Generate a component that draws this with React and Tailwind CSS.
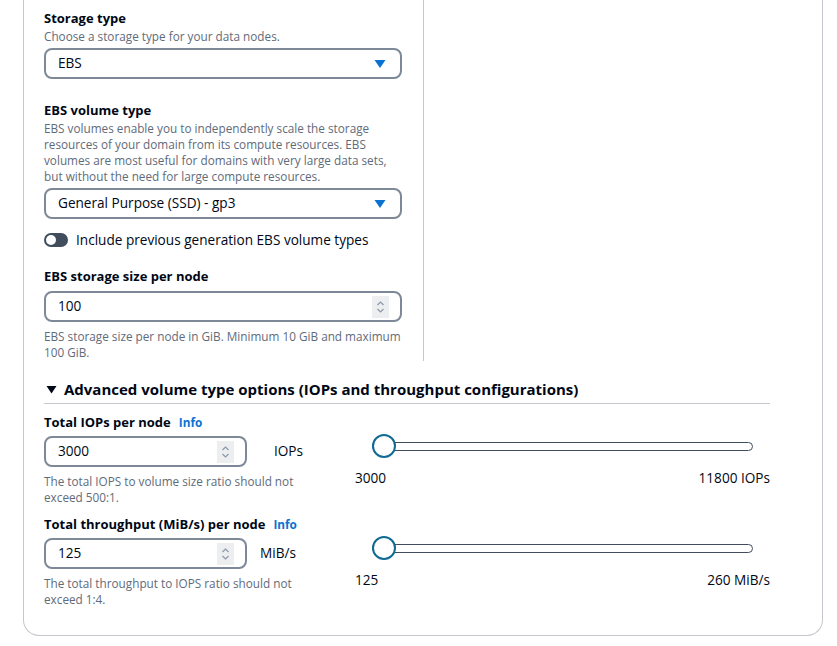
import React from "react";

const font = { fontFamily: "'Open Sans', Roboto, sans-serif" };

function Caret() {
  return (
    <svg width="12" height="10" viewBox="0 0 12 10" className="shrink-0">
      <path d="M0.5 1 L11.5 1 L6 9 Z" fill="#0972d3" />
    </svg>
  );
}

function Spinner() {
  return (
    <div className="w-[17px] h-[22px] bg-[#eceef0] flex items-center justify-center shrink-0">
      <svg width="9" height="14" viewBox="0 0 9 14">
        <path d="M1.5 5 L4.5 2 L7.5 5" fill="none" stroke="#8d99a8" strokeWidth="1.2" />
        <path d="M1.5 9 L4.5 12 L7.5 9" fill="none" stroke="#8d99a8" strokeWidth="1.2" />
      </svg>
    </div>
  );
}

function Select({ value }) {
  return (
    <div className="mt-1 h-[31px] w-[358px] border-2 border-[#7d8998] rounded-lg flex items-center justify-between pl-3 pr-[14px] text-[13.6px] text-[#000716]">
      <span>{value}</span>
      <Caret />
    </div>
  );
}

function NumberInput({ value, width }) {
  return (
    <div className={`h-[31px] ${width} border-2 border-[#7d8998] rounded-lg flex items-center justify-between pl-3 pr-[11px] text-[13.6px] text-[#000716]`}>
      <span>{value}</span>
      <Spinner />
    </div>
  );
}

function Slider({ min, max }) {
  return (
    <div className="w-[415px] -mt-[2px]">
      <div className="relative h-6 mx-[17px] flex items-center">
        <div className="w-full h-[9px] border border-[#414d5c] rounded-full bg-white" />
        <div className="absolute left-0 top-0 w-6 h-6 rounded-full border-2 border-[#0f6b93] bg-white" />
      </div>
      <div className="mt-[10px] flex justify-between text-[13.6px] text-[#000716] leading-5">
        <span>{min}</span>
        <span>{max}</span>
      </div>
    </div>
  );
}

function FieldRow({ label, value, unit, unitGap, desc, min, max }) {
  return (
    <div>
      <div className="flex items-center gap-2 leading-5">
        <span className="text-[13px] font-bold text-[#000716]">{label}</span>
        <span className="text-[11.75px] font-bold text-[#0972d3]">Info</span>
      </div>
      <div className="mt-1 flex items-start">
        <div className="w-[311px]">
          <div className="flex items-start">
            <NumberInput value={value} width="w-[203px]" />
            <span className={`${unitGap} pt-[5px] text-[13.6px] leading-5 text-[#000716]`}>{unit}</span>
          </div>
          <p className="mt-[6px] w-[262px] text-[11.75px] leading-4 text-[#5f6b7a]">{desc}</p>
        </div>
        <Slider min={min} max={max} />
      </div>
    </div>
  );
}

export default function App() {
  return (
    <div className="w-[837px] h-[646px] bg-white overflow-hidden" style={font}>
      <div className="ml-[23px] w-[800px] border border-t-0 border-[#c6c6cd] rounded-b-2xl pl-5 pb-[28px]">
        {/* top: storage config, left column with divider */}
        <div className="flex">
          <div className="w-[358px] pt-2 pb-px">
            <div className="text-[13px] font-bold leading-5 text-[#000716]">Storage type</div>
            <p className="text-[11.75px] leading-4 text-[#5f6b7a]">Choose a storage type for your data nodes.</p>
            <Select value="EBS" />

            <div className="mt-[21px] text-[13px] font-bold leading-5 text-[#000716]">EBS volume type</div>
            <p className="text-[11.75px] leading-4 text-[#5f6b7a]">
              EBS volumes enable you to independently scale the storage resources of your domain from its compute resources. EBS volumes are most useful for domains with very large data sets, but without the need for large compute resources.
            </p>
            <Select value="General Purpose (SSD) - gp3" />

            <div className="mt-[11px] flex items-center gap-2 leading-5">
              <div className="w-6 h-[14px] rounded-full bg-[#414d5c] flex items-center pl-[2px]">
                <div className="w-[10px] h-[10px] rounded-full bg-white" />
              </div>
              <span className="text-[13.6px] text-[#000716]">Include previous generation EBS volume types</span>
            </div>

            <div className="mt-4 text-[13px] font-bold leading-5 text-[#000716]">EBS storage size per node</div>
            <div className="mt-[5px]">
              <NumberInput value="100" width="w-[358px]" />
            </div>
            <p className="mt-[6px] text-[11.75px] leading-4 text-[#5f6b7a]">
              EBS storage size per node in GiB. Minimum 10 GiB and maximum 100 GiB.
            </p>
          </div>
          <div className="ml-[21px] border-l border-[#c6c6cd]" />
        </div>

        {/* advanced options */}
        <div className="w-[726px] mt-4">
          <div className="flex items-center gap-[7px] border-b border-[#c6c6cd] pb-[2px] leading-6">
            <svg width="11" height="9" viewBox="0 0 11 9" className="ml-[2px]">
              <path d="M0.5 1 L10.5 1 L5.5 8.5 Z" fill="#000716" />
            </svg>
            <span className="text-[15px] font-bold text-[#000716]">
              Advanced volume type options (IOPs and throughput configurations)
            </span>
          </div>

          <div className="mt-2">
            <FieldRow
              label="Total IOPs per node"
              value="3000"
              unit="IOPs"
              unitGap="ml-[27px]"
              desc="The total IOPS to volume size ratio should not exceed 500:1."
              min="3000"
              max="11800 IOPs"
            />
          </div>
          <div className="mt-[9px]">
            <FieldRow
              label="Total throughput (MiB/s) per node"
              value="125"
              unit="MiB/s"
              unitGap="ml-[13px]"
              desc="The total throughput to IOPS ratio should not exceed 1:4."
              min="125"
              max="260 MiB/s"
            />
          </div>
        </div>
      </div>
    </div>
  );
}
